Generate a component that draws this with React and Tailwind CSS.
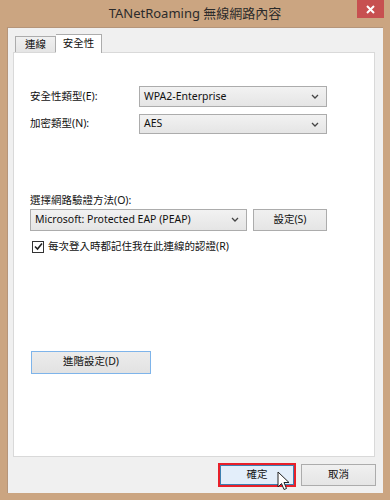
import React from "react";

const font = { fontFamily: '"Noto Sans", "Noto Sans CJK TC", sans-serif' };

function Chevron() {
  return (
    <svg width="8" height="5" viewBox="0 0 8 5" className="shrink-0">
      <path d="M1 1 L4 4 L7 1" fill="none" stroke="#444" strokeWidth="1.3" />
    </svg>
  );
}

function Select({ value, className }) {
  return (
    <div
      className={
        "flex items-center justify-between border border-[#acacac] bg-gradient-to-b from-[#f2f2f2] to-[#e5e5e5] pl-[4px] pr-[7px] text-[#111] " +
        className
      }
    >
      <span>{value}</span>
      <Chevron />
    </div>
  );
}

export default function App() {
  return (
    <div
      className="w-[390px] h-[500px] bg-[#cba581] flex flex-col relative overflow-hidden"
      style={font}
    >
      {/* Title bar */}
      <div className="h-[27px] relative flex items-center justify-center shrink-0">
        <span className="text-[13px] text-[#2b2b2b] mt-[1px]">
          TANetRoaming 無線網路內容
        </span>
        <div className="absolute right-[6px] top-0 w-[27px] h-[18px] bg-[#c75050] flex items-center justify-center">
          <svg width="9" height="9" viewBox="0 0 9 9">
            <path d="M1 1 L8 8 M8 1 L1 8" stroke="#fff" strokeWidth="2" />
          </svg>
        </div>
      </div>

      {/* Body */}
      <div className="flex-1 mx-[7px] mb-[7px] bg-[#f0f0f0] border-t border-l border-[#b5957a] flex flex-col pl-[5px] pr-[7px] pt-[6px] text-[10.5px] text-[#111]">
        {/* Tabs */}
        <div className="flex items-end h-[18px] pl-[2px]">
          <div className="h-[16px] w-[41px] border border-b-0 border-[#acacac] bg-gradient-to-b from-[#f0f0f0] to-[#e5e5e5] flex items-center justify-center">
            連線
          </div>
          <div className="h-[19px] w-[46px] border border-b-0 border-l-0 border-[#acacac] bg-white flex items-center justify-center relative z-10 -mb-[1px]">
            安全性
          </div>
        </div>
        {/* Panel */}
        <div className="h-[405px] w-[362px] bg-white border border-[#d9d9d9] flex flex-col pl-[16px] pt-[33px]">
          <div className="flex items-center h-[21px]">
            <span className="w-[109px]">安全性類型(E):</span>
            <Select value="WPA2-Enterprise" className="w-[188px] h-[21px]" />
          </div>
          <div className="flex items-center h-[20px] mt-[7px]">
            <span className="w-[109px]">加密類型(N):</span>
            <Select value="AES" className="w-[188px] h-[20px]" />
          </div>

          <div className="mt-[59px] leading-[14px]">選擇網路驗證方法(O):</div>
          <div className="flex items-center mt-[1px] gap-[6px]">
            <Select
              value="Microsoft: Protected EAP (PEAP)"
              className="w-[217px] h-[22px]"
            />
            <div className="w-[74px] h-[22px] border border-[#acacac] bg-gradient-to-b from-[#f0f0f0] to-[#e5e5e5] flex items-center justify-center mt-[1px]">
              設定(S)
            </div>
          </div>
          <div className="flex items-center mt-[8px] ml-[2px] gap-[4px]">
            <div className="w-[12px] h-[12px] border border-[#333] bg-white flex items-center justify-center">
              <svg width="9" height="9" viewBox="0 0 9 9">
                <path d="M1 4.5 L3.5 7 L8 1.5" fill="none" stroke="#222" strokeWidth="1.6" />
              </svg>
            </div>
            <span>每次登入時都記住我在此連線的認證(R)</span>
          </div>

          <div className="mt-[96px] ml-[1px] w-[120px] h-[23px] border border-[#7eb4ea] bg-gradient-to-b from-[#ececec] to-[#e2e2e2] flex items-center justify-center">
            進階設定(D)
          </div>
        </div>

        {/* Bottom buttons */}
        <div className="flex justify-end items-center gap-[5px] mt-[6px]">
          <div className="border-2 border-[#e8202a]">
            <div className="w-[74px] h-[20px] border border-[#3c7fb1] bg-[#e3eefa] flex items-center justify-center">
              確定
            </div>
          </div>
          <div className="w-[75px] h-[22px] border border-[#acacac] bg-gradient-to-b from-[#f0f0f0] to-[#e5e5e5] flex items-center justify-center">
            取消
          </div>
        </div>
      </div>

      {/* Cursor */}
      <svg
        className="absolute left-[277px] top-[471px]"
        width="14"
        height="21"
        viewBox="0 0 14 21"
      >
        <path
          d="M1 1 L1 16 L4.5 12.5 L7 18.5 L9.5 17.5 L7 11.5 L12 11.5 Z"
          fill="#fff"
          stroke="#222"
          strokeWidth="1"
          strokeLinejoin="round"
        />
      </svg>
    </div>
  );
}
